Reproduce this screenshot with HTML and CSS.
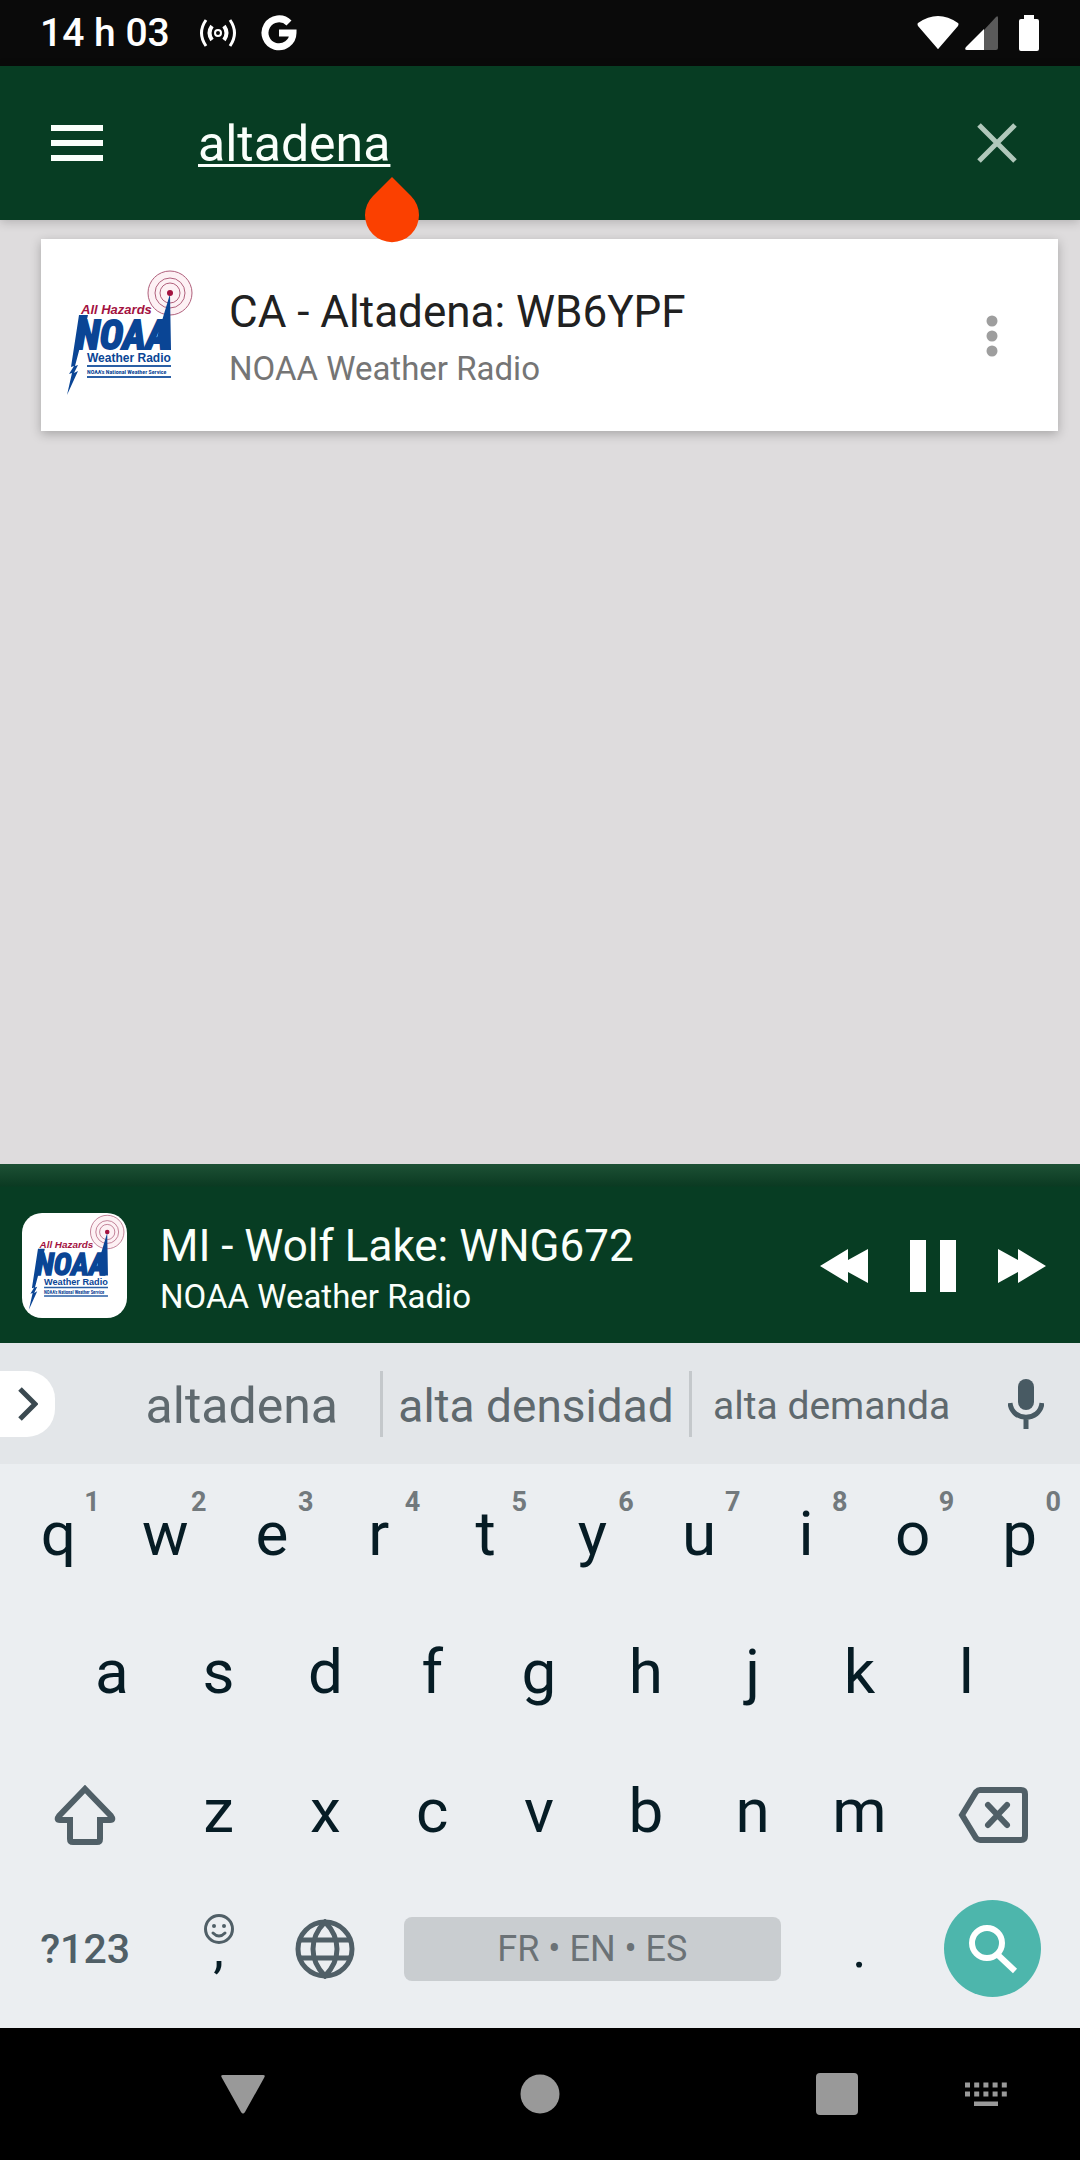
FILE: index.html
```html
<!DOCTYPE html>
<html lang="fr">
<head>
    <meta charset="UTF-8">
    <meta name="viewport" content="width=device-width, initial-scale=1.0">
    <title>NOAA Weather Radio</title>
    <link rel="stylesheet" href="styles.css">
</head>
<body>

<div class="screen">

    <div class="status-bar">
        <span class="clock">14 h 03</span>
        <svg class="status-cast" width="38" height="30" viewBox="0 0 38 30" fill="none" stroke="#fff">
            <circle cx="19" cy="15" r="3" stroke-width="2"/>
            <path d="M13 8Q8 15 13 22M25 8Q30 15 25 22" stroke-width="4"/>
            <path d="M7 2Q-2 15 7 28M31 2Q40 15 31 28" stroke-width="3"/>
        </svg>
        <svg width="36" height="36" viewBox="0 0 36 36" fill="none" stroke="#fff" stroke-width="7">
            <path d="M28 8A14 14 0 1 0 32 18H18"/>
        </svg>
        <span class="status-right">
            <svg width="44" height="36" viewBox="0 0 44 36"><path d="M2 8Q22 -6 42 8Q43 9 42 11L23 33Q22 35 21 33L2 11Q1 9 2 8Z" fill="#fff"/></svg>
            <svg width="34" height="36" viewBox="0 0 34 36"><path d="M19 15L31 2Q33 0 33 3V33Q33 35 31 35H19Z" fill="#5a5a5a"/><path d="M19 14V35H2Q-1 35 1 32Z" fill="#fff"/></svg>
            <svg class="battery" width="20" height="36" viewBox="0 0 20 36"><path d="M5 0H15V4H18Q20 4 20 6V34Q20 36 18 36H2Q0 36 0 34V6Q0 4 2 4H5Z" fill="#fff"/></svg>
        </span>
    </div>

    <header class="app-bar">
        <button type="button" class="icon-btn" aria-label="Menu">
            <svg width="52" height="36" viewBox="0 0 52 36"><path d="M0 0H52V6H0ZM0 15H52V21H0ZM0 30H52V36H0Z" fill="#fafffb"/></svg>
        </button>
        <input type="text" class="search-input" value="altadena" aria-label="Search">
        <button type="button" class="icon-btn" aria-label="Clear">
            <svg width="40" height="40" viewBox="0 0 40 40"><path d="M2 2L38 38M38 2L2 38" stroke="#b1c8bb" stroke-width="5"/></svg>
        </button>
        <svg class="text-handle" width="56" height="68" viewBox="0 0 56 68"><path d="M28 1L47 20A27 27 0 1 1 9 20Z" fill="#fb4000"/></svg>
    </header>

    <main class="results">
        <article class="card">
            <svg class="card-logo" viewBox="0 0 138 138" role="img" aria-label="NOAA Weather Radio">
                <circle cx="112" cy="25" r="22" fill="#fdf1f4" stroke="#b0607c"/>
                <circle cx="112" cy="25" r="15" fill="none" stroke="#b0607c"/>
                <circle cx="112" cy="25" r="10" fill="none" stroke="#b0607c"/>
                <path d="M112 26L113 82H103L102 76H97Z" fill="#0a4595"/>
                <circle cx="112" cy="25" r="3" fill="#a3123f"/>
                <text class="logo-hazards" x="23" y="46">All Hazards</text>
                <path d="M21 47L13 99L16 98L11 106L14 105L9 127L20 103L16 105L20 97L17 98L26 64L30 47Z" fill="#0a4595"/>
                <text class="logo-noaa" x="18" y="81">NOAA</text>
                <text class="logo-radio" x="29" y="94">Weather Radio</text>
                <path d="M29 98H113M29 109H113" stroke="#2a5fa5" stroke-width="2"/>
                <text class="logo-service" x="29" y="106">NOAA's National Weather Service</text>
            </svg>
            <div class="card-text">
                <h2>CA - Altadena: WB6YPF</h2>
                <p>NOAA Weather Radio</p>
            </div>
            <button type="button" class="icon-btn" aria-label="More options">
                <svg width="12" height="44" viewBox="0 0 12 44" fill="#9e9e9e"><circle cx="6" cy="6" r="5.5"/><circle cx="6" cy="21" r="5.5"/><circle cx="6" cy="36" r="5.5"/></svg>
            </button>
        </article>
    </main>

    <section class="player">
        <svg class="player-logo" viewBox="0 0 138 138" role="img" aria-label="NOAA Weather Radio">
            <circle cx="112" cy="25" r="22" fill="#fdf1f4" stroke="#b0607c"/>
            <circle cx="112" cy="25" r="15" fill="none" stroke="#b0607c"/>
            <circle cx="112" cy="25" r="10" fill="none" stroke="#b0607c"/>
            <path d="M112 26L113 82H103L102 76H97Z" fill="#0a4595"/>
            <circle cx="112" cy="25" r="3" fill="#a3123f"/>
            <text class="logo-hazards" x="23" y="46">All Hazards</text>
            <path d="M21 47L13 99L16 98L11 106L14 105L9 127L20 103L16 105L20 97L17 98L26 64L30 47Z" fill="#0a4595"/>
            <text class="logo-noaa" x="18" y="81">NOAA</text>
            <text class="logo-radio" x="29" y="94">Weather Radio</text>
            <path d="M29 98H113M29 109H113" stroke="#2a5fa5" stroke-width="2"/>
            <text class="logo-service" x="29" y="106">NOAA's National Weather Service</text>
        </svg>
        <div class="player-text">
            <h2>MI - Wolf Lake: WNG672</h2>
            <p>NOAA Weather Radio</p>
        </div>
        <div class="controls">
            <button type="button" aria-label="Previous"><svg width="48" height="34" viewBox="0 0 48 34"><path d="M0 17L28 0V11L48 0V34L28 23V34Z" fill="#fff"/></svg></button>
            <button type="button" aria-label="Pause"><svg width="46" height="52" viewBox="0 0 46 52"><path d="M0 0H16V52H0ZM30 0H46V52H30Z" fill="#fff"/></svg></button>
            <button type="button" aria-label="Next"><svg width="48" height="34" viewBox="0 0 48 34"><path d="M48 17L20 0V11L0 0V34L20 23V34Z" fill="#fff"/></svg></button>
        </div>
    </section>

    <section class="keyboard">
        <div class="suggestions">
            <button type="button" class="expand-btn" aria-label="Expand">
                <svg width="20" height="34" viewBox="0 0 20 34"><path d="M2 2L17 17L2 32" fill="none" stroke="#3b4950" stroke-width="5"/></svg>
            </button>
            <div class="words">
                <button type="button">altadena</button>
                <button type="button" class="medium">alta densidad</button>
                <button type="button" class="long">alta demanda</button>
            </div>
            <button type="button" class="mic-btn" aria-label="Voice input">
                <svg width="36" height="50" viewBox="0 0 36 50"><rect x="10" y="0" width="16" height="31" rx="8" fill="#485a63"/><path d="M2 24C4 43 32 43 34 24M18 38V50" fill="none" stroke="#485a63" stroke-width="5"/></svg>
            </button>
        </div>

        <div class="keys">
            <div class="row">
                <button type="button" class="key">q<sup>1</sup></button>
                <button type="button" class="key">w<sup>2</sup></button>
                <button type="button" class="key">e<sup>3</sup></button>
                <button type="button" class="key">r<sup>4</sup></button>
                <button type="button" class="key">t<sup>5</sup></button>
                <button type="button" class="key">y<sup>6</sup></button>
                <button type="button" class="key">u<sup>7</sup></button>
                <button type="button" class="key">i<sup>8</sup></button>
                <button type="button" class="key">o<sup>9</sup></button>
                <button type="button" class="key">p<sup>0</sup></button>
            </div>
            <div class="row row-home">
                <button type="button" class="key">a</button>
                <button type="button" class="key">s</button>
                <button type="button" class="key">d</button>
                <button type="button" class="key">f</button>
                <button type="button" class="key">g</button>
                <button type="button" class="key">h</button>
                <button type="button" class="key">j</button>
                <button type="button" class="key">k</button>
                <button type="button" class="key">l</button>
            </div>
            <div class="row">
                <button type="button" class="key key-wide key-edit" aria-label="Shift">
                    <svg width="62" height="60" viewBox="0 0 62 60"><path d="M31 4L57 31Q60 35 56 35H46V54Q46 57 43 57H19Q16 57 16 54V35H6Q2 35 5 31Z" fill="none" stroke="#505f67" stroke-width="6"/></svg>
                </button>
                <button type="button" class="key">z</button>
                <button type="button" class="key">x</button>
                <button type="button" class="key">c</button>
                <button type="button" class="key">v</button>
                <button type="button" class="key">b</button>
                <button type="button" class="key">n</button>
                <button type="button" class="key">m</button>
                <button type="button" class="key key-wide key-edit" aria-label="Backspace">
                    <svg width="70" height="56" viewBox="0 0 70 56" fill="none" stroke="#505f67"><path d="M4 28L18 5Q20 3 22 3H63Q67 3 67 7V49Q67 53 63 53H22Q20 53 18 51Z" stroke-width="6"/><path d="M30 18L49 38M49 18L30 38" stroke-width="6" stroke-linecap="round"/></svg>
                </button>
            </div>
            <div class="row">
                <button type="button" class="key key-wide key-symbols">?123</button>
                <button type="button" class="key key-mark">,
                    <svg class="smiley" width="30" height="30" viewBox="0 0 30 30" fill="none" stroke="#505f67"><circle cx="15" cy="15" r="13.5" stroke-width="3"/><path d="M9 19Q15 25 21 19" stroke-width="3" stroke-linecap="round"/><circle cx="10" cy="12" r="2" fill="#505f67" stroke="none"/><circle cx="20" cy="12" r="2" fill="#505f67" stroke="none"/></svg>
                </button>
                <button type="button" class="key" aria-label="Language">
                    <svg width="60" height="60" viewBox="0 0 60 60" fill="none" stroke="#505f67" stroke-width="5"><circle cx="30" cy="30" r="27"/><path d="M5 21H55M5 39H55M30 3C14 19 14 41 30 57C46 41 46 19 30 3Z"/></svg>
                </button>
                <button type="button" class="key key-space"><span>FR • EN • ES</span></button>
                <button type="button" class="key key-mark">.</button>
                <button type="button" class="key key-wide" aria-label="Search">
                    <span class="search-disc"><svg width="50" height="50" viewBox="0 0 50 50" fill="none" stroke="#fff"><circle cx="19" cy="19" r="15" stroke-width="6"/><path d="M30 31L47 47" stroke-width="6"/></svg></span>
                </button>
            </div>
        </div>
    </section>

    <nav class="nav-bar">
        <div class="nav-main">
            <button type="button" aria-label="Back"><svg width="44" height="40" viewBox="0 0 44 40"><path d="M2 1H42Q45 1 43 4L24 38Q22 41 20 38L1 4Q-1 1 2 1Z" fill="#999"/></svg></button>
            <button type="button" aria-label="Home"><svg width="40" height="40" viewBox="0 0 40 40"><circle cx="20" cy="20" r="19.5" fill="#999"/></svg></button>
            <button type="button" aria-label="Recent apps"><svg width="42" height="42" viewBox="0 0 42 42"><rect width="42" height="42" rx="4" fill="#999"/></svg></button>
        </div>
        <button type="button" aria-label="Switch keyboard">
            <svg width="42" height="24" viewBox="0 0 42 24" stroke="#999" stroke-width="5"><path d="M0 3H42M0 12H42" stroke-dasharray="5 4.2"/><path d="M9 22H33"/></svg>
        </button>
    </nav>

</div>

</body>
</html>
```
FILE: styles.css
```css
* {
    box-sizing: border-box;
}

body {
    margin: 0;
    font-family: Roboto, "Noto Sans", sans-serif;
    background-color: #dedcdd;
}

button {
    display: flex;
    align-items: center;
    justify-content: center;
    padding: 0;
    border: none;
    background: none;
    font-family: inherit;
    cursor: pointer;
}

h2, p {
    margin: 0;
    font-weight: 400;
    white-space: nowrap;
}

svg {
    display: block;
    flex-shrink: 0;
}

.screen {
    display: flex;
    flex-direction: column;
    min-height: 100vh;
}

/* Status bar */
.status-bar {
    display: flex;
    align-items: center;
    height: 66px;
    padding: 0 41px 0 40px;
    background-color: #0a0a0a;
    color: #fff;
}

.clock {
    font-size: 39px;
    font-weight: 500;
}

.status-cast {
    margin: 0 24px 0 29px;
}

.status-right {
    display: flex;
    align-items: center;
    gap: 5px;
    margin-left: auto;
}

.battery {
    margin-left: 15px;
}

/* App bar */
.app-bar {
    position: relative;
    z-index: 1;
    display: flex;
    align-items: center;
    height: 154px;
    padding: 0 30px 0 24px;
    background-color: #073d23;
    box-shadow: 0 2px 10px rgba(0, 0, 0, 0.2);
}

.icon-btn {
    width: 106px;
    height: 106px;
}

.search-input {
    flex: 1;
    min-width: 0;
    margin-left: 68px;
    padding: 2px 0 0;
    border: none;
    outline: none;
    background: none;
    color: #fafffb;
    font-family: inherit;
    font-size: 50px;
    text-decoration: underline;
    text-decoration-thickness: 3px;
    text-underline-offset: 3px;
}

.text-handle {
    position: absolute;
    top: 110px;
    left: 364px;
}

/* Results */
.results {
    flex: 1;
    overflow: hidden;
    padding: 19px 22px 19px 41px;
}

.card {
    display: flex;
    align-items: center;
    padding: 29px 13px 25px 17px;
    background-color: #fff;
    box-shadow: 0 3px 10px rgba(0, 0, 0, 0.25);
}

.card-logo {
    width: 138px;
    height: 138px;
}

.card-text {
    flex: 1;
    margin-left: 33px;
    color: #757575;
}

.card-text h2 {
    color: #212121;
    font-size: 44px;
    line-height: 64px;
}

.card-text p {
    font-size: 33px;
    line-height: 50px;
}

.logo-hazards, .logo-radio {
    font-family: "Liberation Sans", Arial, sans-serif;
    font-size: 12px;
    font-weight: bold;
    fill: #0a4595;
}

.logo-hazards {
    font-size: 13px;
    font-style: italic;
    fill: #a3123f;
}

.logo-noaa, .logo-service {
    font-family: "Liberation Sans Narrow", "Roboto Condensed", sans-serif;
    font-size: 40px;
    font-style: italic;
    font-weight: bold;
    fill: #0a4595;
    stroke: #0a4595;
    stroke-width: 2px;
}

.logo-service {
    font-size: 6px;
    font-style: normal;
    stroke: none;
}

/* Player */
.player {
    display: flex;
    align-items: center;
    padding: 49px 34px 25px 22px;
    background: linear-gradient(#1d5135, #0b3a22 22px, #073d23 23px);
    color: #fafffb;
}

.player-logo {
    width: 105px;
    height: 105px;
    border-radius: 20px;
    background-color: #fff;
}

.player-text {
    flex: 1;
    margin-left: 33px;
    padding-top: 2px;
}

.player-text h2 {
    font-size: 44px;
    line-height: 60px;
}

.player-text p {
    font-size: 33px;
    line-height: 42px;
}

.controls {
    display: flex;
    align-items: center;
    gap: 42px;
}

/* Keyboard */
.keyboard {
    background-color: #ebeef1;
}

.suggestions {
    display: flex;
    align-items: center;
    height: 121px;
    background-color: #e3e6e9;
}

.expand-btn {
    width: 55px;
    height: 66px;
    border-radius: 0 28px 28px 0;
    background-color: #fff;
}

.words {
    flex: 1;
    display: grid;
    grid-template-columns: 9fr 10fr 9fr;
    margin-left: 49px;
}

.words button {
    height: 66px;
    padding-top: 4px;
    border-right: 3px solid #c4c8cb;
    color: #5f696e;
    font-size: 50px;
    white-space: nowrap;
}

.words button:last-child {
    border-right: none;
}

.words .medium {
    font-size: 46px;
}

.words .long {
    font-size: 39px;
}

.mic-btn {
    width: 109px;
    height: 100px;
}

.keys {
    display: grid;
    grid-template-rows: repeat(4, 1fr);
    height: 564px;
    padding: 0 7px 10px 5px;
}

.row {
    display: grid;
    grid-template-columns: repeat(20, 1fr);
}

.row-home {
    padding: 0 5%;
    grid-template-columns: repeat(18, 1fr);
}

.key {
    position: relative;
    grid-column: span 2;
    color: #061c25;
    font-size: 62px;
}

.key sup {
    position: absolute;
    top: 22px;
    right: 12px;
    color: #72797d;
    font-size: 27px;
    font-weight: 700;
    line-height: 32px;
}

.key-wide {
    grid-column: span 3;
}

.key-edit {
    padding-top: 10px;
}

.key-symbols {
    color: #505f67;
    font-size: 41px;
    font-weight: 500;
}

.key-mark {
    font-size: 54px;
}

.smiley {
    position: absolute;
    top: 34px;
    left: 50%;
    margin-left: -15px;
}

.key-space {
    grid-column: span 8;
    padding: 0 25px;
    color: #6b7276;
    font-size: 36px;
}

.key-space span {
    flex: 1;
    border-radius: 8px;
    background-color: #c9cdd0;
    line-height: 64px;
}

.search-disc {
    display: flex;
    align-items: center;
    justify-content: center;
    width: 97px;
    height: 97px;
    border-radius: 50%;
    background-color: #4db6ac;
}

/* Navigation bar */
.nav-bar {
    display: flex;
    align-items: center;
    height: 132px;
    padding: 0 44px 0 193px;
    background-color: #000;
}

.nav-main {
    flex: 1;
    display: flex;
    justify-content: space-between;
    margin-right: 49px;
}

.nav-bar button {
    width: 100px;
    height: 100px;
}
```
